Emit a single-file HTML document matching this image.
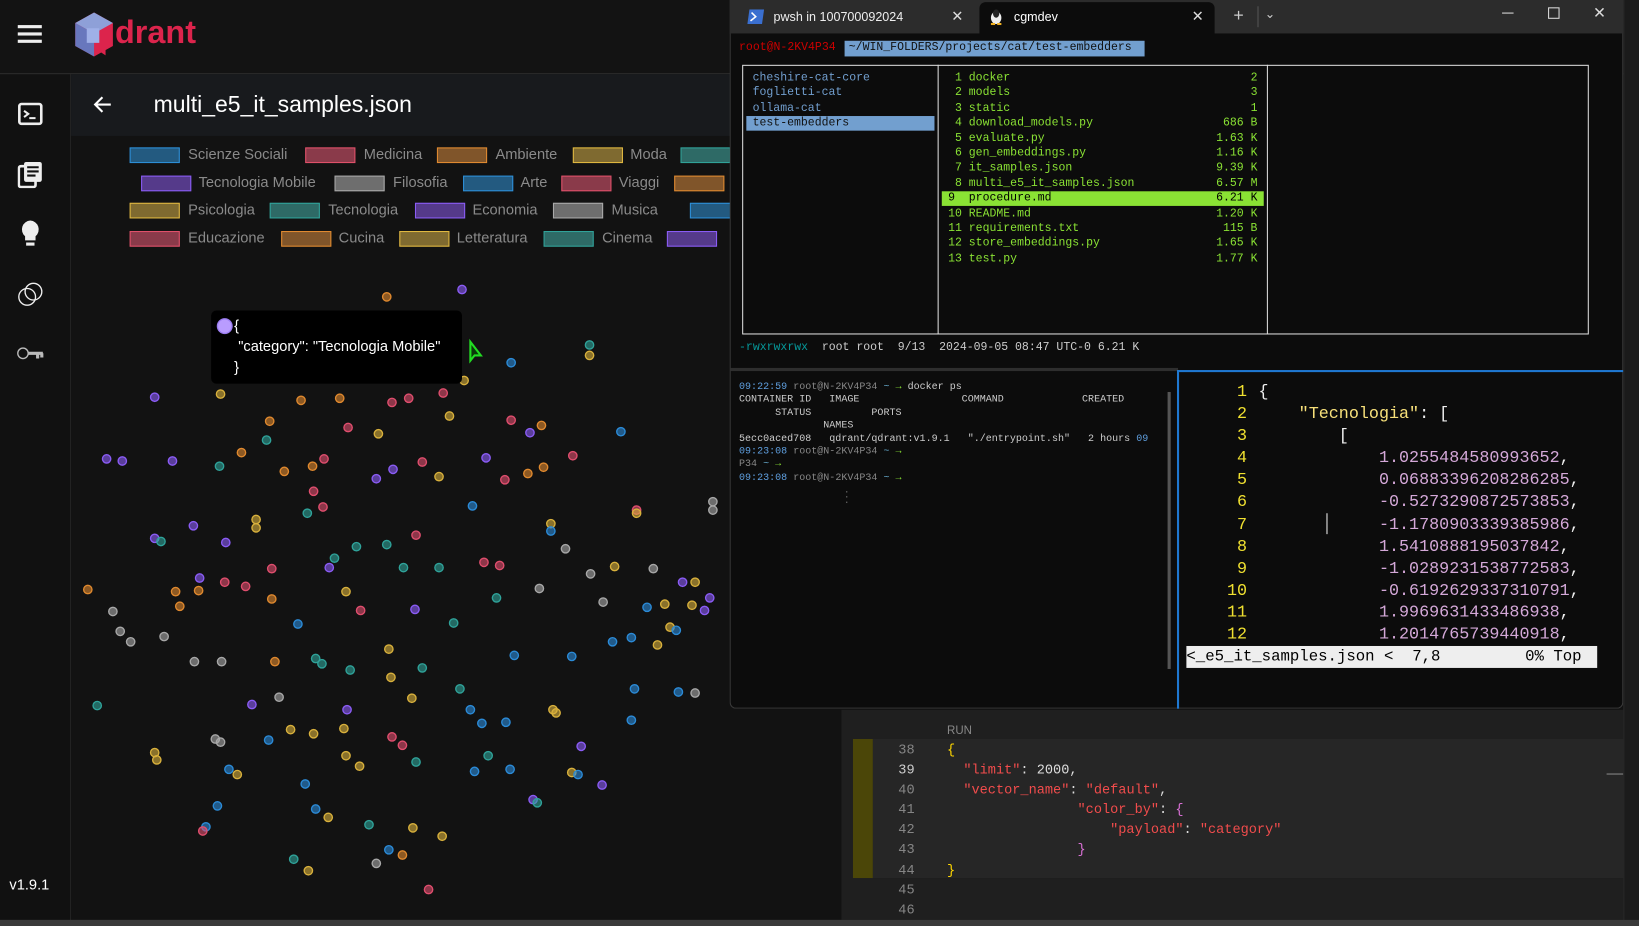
<!DOCTYPE html>
<html><head><meta charset="utf-8">
<style>
html,body{margin:0;padding:0;width:1639px;height:926px;overflow:hidden;background:#121212;}
#root{position:absolute;left:0;top:0;width:1568px;height:886px;transform:scale(1.04528);transform-origin:0 0;background:#121212;font-family:"Liberation Sans",sans-serif;overflow:hidden;}
.a{position:absolute;white-space:pre;}
.m{font-family:"Liberation Mono","DejaVu Sans Mono",monospace;}
.sw{position:absolute;width:46px;height:13px;border:1px solid;}
.lg{position:absolute;color:#8a8a8a;font-size:14px;line-height:17px;}
</style></head><body><div id="root">

<!-- sidebar -->
<div class="a" style="left:0;top:0;width:67px;height:886px;background:#111;border-right:1px solid #232323"></div>
<div class="a" style="left:0;top:0;width:1568px;height:70px;background:#131313;border-bottom:1px solid #2c2c2c"></div>
<div class="a" style="left:17px;top:24px;width:23px;height:3px;background:#eee;box-shadow:0 7px 0 #eee,0 14px 0 #eee"></div>
<svg class="a" style="left:70px;top:11px" width="40" height="44" viewBox="0 0 40 44">
<polygon points="20,1 38,11 38,33 20,43 2,33 2,11" fill="#dc244c"/>
<polygon points="20,1 38,11 20,21 2,11" fill="#8ea0d8"/>
<polygon points="2,11 20,21 20,43 2,33" fill="#6877bd"/>
<rect x="13" y="16" width="12" height="14" fill="#9fb0e8"/>
<polygon points="25,30 31,34 31,42 25,38" fill="#dc244c"/>
</svg>
<div class="a" style="left:110px;top:13px;color:#dc244c;font-size:31px;font-weight:bold;letter-spacing:0px">drant</div>
<svg class="a" style="left:17px;top:98px" width="24" height="22" viewBox="0 0 24 22"><rect x="1.5" y="1.5" width="21" height="19" rx="2" fill="none" stroke="#eee" stroke-width="2.5"/><path d="M6 8l4 3-4 3M11 15h6" stroke="#eee" stroke-width="2" fill="none"/></svg>
<svg class="a" style="left:17px;top:154px" width="24" height="26" viewBox="0 0 24 26"><rect x="1" y="5" width="16" height="20" rx="2" fill="none" stroke="#eee" stroke-width="2.5"/><rect x="6" y="1" width="17" height="19" rx="2" fill="#eee"/><path d="M9 6h11M9 10h11M9 14h8" stroke="#111" stroke-width="2"/></svg>
<svg class="a" style="left:19px;top:210px" width="20" height="28" viewBox="0 0 20 28"><path d="M10 1a8.5 8.5 0 0 0-5 15v4h10v-4a8.5 8.5 0 0 0-5-15z" fill="#eee"/><rect x="6" y="22" width="8" height="3" fill="#eee"/></svg>
<svg class="a" style="left:15px;top:268px" width="28" height="28" viewBox="0 0 28 28"><circle cx="11" cy="16" r="8" fill="none" stroke="#eee" stroke-width="3"/><circle cx="17" cy="11" r="8" fill="none" stroke="#eee" stroke-width="3"/></svg>
<svg class="a" style="left:15px;top:330px" width="28" height="16" viewBox="0 0 28 16"><circle cx="7" cy="8" r="5" fill="none" stroke="#bbb" stroke-width="3"/><path d="M12 8h14M21 8v5M25 8v4" stroke="#bbb" stroke-width="3"/></svg>
<div class="a" style="left:9px;top:838px;color:#fff;font-size:14px">v1.9.1</div>

<!-- title bar -->
<div class="a" style="left:68px;top:71px;width:640px;height:59px;background:#181a1d"></div>
<svg class="a" style="left:88px;top:90px" width="20" height="20" viewBox="0 0 20 20"><path d="M18 10H3M10 3l-7 7 7 7" stroke="#fff" stroke-width="2" fill="none"/></svg>
<div class="a" style="left:147px;top:87px;color:#fff;font-size:22px">multi_e5_it_samples.json</div>

<!-- legend -->
<div class="sw" style="left:124px;top:141px;background:#235a80;border-color:#2d8fd8"></div><div class="lg" style="left:180px;top:139px">Scienze Sociali</div>
<div class="sw" style="left:292px;top:141px;background:#8a3a4a;border-color:#e0506a"></div><div class="lg" style="left:348px;top:139px">Medicina</div>
<div class="sw" style="left:418px;top:141px;background:#80552a;border-color:#e08a30"></div><div class="lg" style="left:474px;top:139px">Ambiente</div>
<div class="sw" style="left:548px;top:141px;background:#7f6a30;border-color:#e0b840"></div><div class="lg" style="left:603px;top:139px">Moda</div>
<div class="sw" style="left:651px;top:141px;background:#2e6a66;border-color:#30a39a"></div>
<div class="sw" style="left:135px;top:168px;background:#553a8a;border-color:#8b5cf6"></div><div class="lg" style="left:190px;top:166px">Tecnologia Mobile</div>
<div class="sw" style="left:320px;top:168px;background:#6e6e6e;border-color:#aaa"></div><div class="lg" style="left:376px;top:166px">Filosofia</div>
<div class="sw" style="left:443px;top:168px;background:#235a80;border-color:#2d8fd8"></div><div class="lg" style="left:498px;top:166px">Arte</div>
<div class="sw" style="left:537px;top:168px;background:#8a3a4a;border-color:#e0506a"></div><div class="lg" style="left:592px;top:166px">Viaggi</div>
<div class="sw" style="left:645px;top:168px;background:#80552a;border-color:#e08a30"></div>
<div class="sw" style="left:124px;top:194px;background:#7f6a30;border-color:#e0b840"></div><div class="lg" style="left:180px;top:192px">Psicologia</div>
<div class="sw" style="left:258px;top:194px;background:#2e6a66;border-color:#30a39a"></div><div class="lg" style="left:314px;top:192px">Tecnologia</div>
<div class="sw" style="left:397px;top:194px;background:#553a8a;border-color:#8b5cf6"></div><div class="lg" style="left:452px;top:192px">Economia</div>
<div class="sw" style="left:529px;top:194px;background:#6e6e6e;border-color:#aaa"></div><div class="lg" style="left:585px;top:192px">Musica</div>
<div class="sw" style="left:660px;top:194px;background:#235a80;border-color:#2d8fd8"></div>
<div class="sw" style="left:124px;top:221px;background:#8a3a4a;border-color:#e0506a"></div><div class="lg" style="left:180px;top:219px">Educazione</div>
<div class="sw" style="left:269px;top:221px;background:#80552a;border-color:#e08a30"></div><div class="lg" style="left:324px;top:219px">Cucina</div>
<div class="sw" style="left:382px;top:221px;background:#7f6a30;border-color:#e0b840"></div><div class="lg" style="left:437px;top:219px">Letteratura</div>
<div class="sw" style="left:520px;top:221px;background:#2e6a66;border-color:#30a39a"></div><div class="lg" style="left:576px;top:219px">Cinema</div>
<div class="sw" style="left:638px;top:221px;background:#553a8a;border-color:#8b5cf6"></div>

<!-- scatter -->
<svg class="a" style="left:0;top:0" width="720" height="886" viewBox="0 0 720 886">
<defs><style>
.o{fill:rgba(224,137,46,.6);stroke:#e0892e}.p{fill:rgba(139,92,246,.6);stroke:#8b5cf6}.r{fill:rgba(224,78,110,.6);stroke:#e04e6e}
.y{fill:rgba(217,177,60,.6);stroke:#d9b13c}.t{fill:rgba(47,163,154,.6);stroke:#2fa39a}.b{fill:rgba(43,139,216,.6);stroke:#2b8bd8}.g{fill:rgba(168,168,168,.6);stroke:#a8a8a8}
circle{stroke-width:1.3}
</style></defs>
<g>
<circle class="o" cx="370" cy="284" r="4"/><circle class="p" cx="442" cy="277" r="4"/><circle class="t" cx="564" cy="330" r="4"/><circle class="y" cx="564" cy="340" r="4"/><circle class="b" cx="489" cy="347" r="4"/><circle class="p" cx="148" cy="380" r="4"/><circle class="y" cx="211" cy="377" r="4"/><circle class="y" cx="444" cy="364" r="4"/><circle class="o" cx="288" cy="383" r="4"/><circle class="o" cx="325" cy="381" r="4"/><circle class="r" cx="375" cy="385" r="4"/><circle class="r" cx="391" cy="381" r="4"/><circle class="r" cx="424" cy="376" r="4"/><circle class="o" cx="258" cy="403" r="4"/><circle class="y" cx="430" cy="398" r="4"/><circle class="r" cx="333" cy="409" r="4"/><circle class="y" cx="362" cy="415" r="4"/><circle class="r" cx="489" cy="402" r="4"/><circle class="p" cx="507" cy="414" r="4"/><circle class="o" cx="518" cy="407" r="4"/><circle class="b" cx="594" cy="413" r="4"/><circle class="r" cx="548" cy="436" r="4"/><circle class="t" cx="255" cy="421" r="4"/><circle class="o" cx="231" cy="433" r="4"/><circle class="p" cx="102" cy="439" r="4"/><circle class="p" cx="117" cy="441" r="4"/><circle class="p" cx="165" cy="441" r="4"/><circle class="t" cx="210" cy="446" r="4"/><circle class="o" cx="272" cy="451" r="4"/><circle class="o" cx="299" cy="446" r="4"/><circle class="r" cx="310" cy="439" r="4"/><circle class="p" cx="376" cy="449" r="4"/><circle class="r" cx="404" cy="442" r="4"/><circle class="p" cx="465" cy="438" r="4"/><circle class="o" cx="505" cy="453" r="4"/><circle class="o" cx="520" cy="447" r="4"/><circle class="r" cx="483" cy="459" r="4"/><circle class="p" cx="360" cy="458" r="4"/><circle class="y" cx="420" cy="456" r="4"/><circle class="r" cx="300" cy="470" r="4"/><circle class="r" cx="309" cy="485" r="4"/><circle class="y" cx="245" cy="497" r="4"/><circle class="y" cx="245" cy="505" r="4"/><circle class="t" cx="294" cy="491" r="4"/><circle class="b" cx="452" cy="484" r="4"/><circle class="y" cx="527" cy="501" r="4"/><circle class="b" cx="527" cy="508" r="4"/><circle class="r" cx="609" cy="488" r="4"/><circle class="y" cx="609" cy="491" r="4"/><circle class="g" cx="682" cy="480" r="4"/><circle class="g" cx="682" cy="488" r="4"/><circle class="p" cx="185" cy="503" r="4"/><circle class="p" cx="148" cy="515" r="4"/><circle class="t" cx="154" cy="518" r="4"/><circle class="p" cx="216" cy="519" r="4"/><circle class="t" cx="341" cy="523" r="4"/><circle class="t" cx="370" cy="521" r="4"/><circle class="r" cx="398" cy="512" r="4"/><circle class="p" cx="191" cy="553" r="4"/><circle class="o" cx="190" cy="565" r="4"/><circle class="r" cx="235" cy="561" r="4"/><circle class="r" cx="215" cy="557" r="4"/><circle class="r" cx="260" cy="544" r="4"/><circle class="t" cx="320" cy="534" r="4"/><circle class="p" cx="315" cy="543" r="4"/><circle class="t" cx="386" cy="543" r="4"/><circle class="t" cx="420" cy="543" r="4"/><circle class="r" cx="463" cy="538" r="4"/><circle class="r" cx="478" cy="541" r="4"/><circle class="g" cx="541" cy="525" r="4"/><circle class="g" cx="565" cy="549" r="4"/><circle class="y" cx="588" cy="542" r="4"/><circle class="g" cx="625" cy="544" r="4"/><circle class="y" cx="665" cy="557" r="4"/><circle class="p" cx="679" cy="572" r="4"/><circle class="p" cx="653" cy="557" r="4"/><circle class="o" cx="84" cy="564" r="4"/><circle class="g" cx="108" cy="585" r="4"/><circle class="g" cx="115" cy="604" r="4"/><circle class="g" cx="125" cy="614" r="4"/><circle class="g" cx="157" cy="609" r="4"/><circle class="o" cx="168" cy="566" r="4"/><circle class="o" cx="172" cy="580" r="4"/><circle class="o" cx="260" cy="573" r="4"/><circle class="b" cx="285" cy="597" r="4"/><circle class="r" cx="345" cy="584" r="4"/><circle class="y" cx="331" cy="566" r="4"/><circle class="p" cx="397" cy="583" r="4"/><circle class="t" cx="434" cy="596" r="4"/><circle class="t" cx="475" cy="572" r="4"/><circle class="g" cx="516" cy="563" r="4"/><circle class="g" cx="577" cy="576" r="4"/><circle class="b" cx="619" cy="581" r="4"/><circle class="y" cx="636" cy="578" r="4"/><circle class="y" cx="662" cy="579" r="4"/><circle class="p" cx="674" cy="584" r="4"/><circle class="g" cx="186" cy="633" r="4"/><circle class="g" cx="212" cy="633" r="4"/><circle class="o" cx="263" cy="633" r="4"/><circle class="t" cx="302" cy="630" r="4"/><circle class="t" cx="308" cy="635" r="4"/><circle class="t" cx="335" cy="641" r="4"/><circle class="y" cx="372" cy="621" r="4"/><circle class="y" cx="374" cy="648" r="4"/><circle class="t" cx="404" cy="639" r="4"/><circle class="t" cx="440" cy="659" r="4"/><circle class="b" cx="492" cy="627" r="4"/><circle class="b" cx="547" cy="628" r="4"/><circle class="b" cx="586" cy="614" r="4"/><circle class="b" cx="604" cy="610" r="4"/><circle class="y" cx="629" cy="617" r="4"/><circle class="y" cx="641" cy="600" r="4"/><circle class="b" cx="647" cy="603" r="4"/><circle class="b" cx="607" cy="659" r="4"/><circle class="b" cx="649" cy="662" r="4"/><circle class="g" cx="665" cy="663" r="4"/><circle class="t" cx="93" cy="675" r="4"/><circle class="p" cx="241" cy="674" r="4"/><circle class="g" cx="267" cy="667" r="4"/><circle class="p" cx="332" cy="679" r="4"/><circle class="y" cx="329" cy="697" r="4"/><circle class="y" cx="394" cy="668" r="4"/><circle class="b" cx="450" cy="679" r="4"/><circle class="b" cx="461" cy="692" r="4"/><circle class="b" cx="484" cy="691" r="4"/><circle class="y" cx="529" cy="679" r="4"/><circle class="y" cx="532" cy="682" r="4"/><circle class="b" cx="604" cy="689" r="4"/><circle class="g" cx="211" cy="710" r="4"/><circle class="g" cx="206" cy="707" r="4"/><circle class="y" cx="278" cy="698" r="4"/><circle class="b" cx="257" cy="708" r="4"/><circle class="y" cx="300" cy="702" r="4"/><circle class="y" cx="331" cy="723" r="4"/><circle class="y" cx="344" cy="733" r="4"/><circle class="r" cx="375" cy="705" r="4"/><circle class="r" cx="385" cy="713" r="4"/><circle class="t" cx="398" cy="729" r="4"/><circle class="t" cx="467" cy="723" r="4"/><circle class="b" cx="454" cy="738" r="4"/><circle class="b" cx="488" cy="736" r="4"/><circle class="y" cx="547" cy="739" r="4"/><circle class="b" cx="553" cy="741" r="4"/><circle class="p" cx="556" cy="714" r="4"/><circle class="p" cx="576" cy="751" r="4"/><circle class="y" cx="148" cy="720" r="4"/><circle class="y" cx="150" cy="727" r="4"/><circle class="b" cx="219" cy="736" r="4"/><circle class="y" cx="227" cy="741" r="4"/><circle class="b" cx="292" cy="750" r="4"/><circle class="b" cx="208" cy="771" r="4"/><circle class="b" cx="302" cy="774" r="4"/><circle class="y" cx="314" cy="782" r="4"/><circle class="t" cx="353" cy="789" r="4"/><circle class="y" cx="395" cy="792" r="4"/><circle class="y" cx="423" cy="800" r="4"/><circle class="p" cx="510" cy="765" r="4"/><circle class="t" cx="514" cy="768" r="4"/><circle class="b" cx="197" cy="791" r="4"/><circle class="r" cx="194" cy="795" r="4"/><circle class="t" cx="281" cy="822" r="4"/><circle class="y" cx="295" cy="833" r="4"/><circle class="g" cx="360" cy="826" r="4"/><circle class="b" cx="372" cy="813" r="4"/><circle class="o" cx="385" cy="818" r="4"/><circle class="r" cx="410" cy="851" r="4"/><circle class="g" cx="705" cy="603" r="4"/>
</g>
<rect x="202" y="297" width="240" height="70" rx="5" fill="#000"/>
<circle cx="215" cy="312" r="7" fill="#b99cff" stroke="#9a7cf0" stroke-width="1.5"/>
<path d="M450 327l0 18 4-5 6 0z" fill="#0a3a0a" stroke="#22dd22" stroke-width="2"/>
</svg>
<div class="a" style="left:224px;top:301px;color:#fff;font-size:14px;line-height:20px">{
 "category": "Tecnologia Mobile"
}</div>

<!-- terminal window -->
<div class="a" style="left:698px;top:0;width:855px;height:678px;background:#0c0c0c;border:1px solid #3a3a3a;border-top:none;border-radius:0 0 6px 6px;box-sizing:border-box"></div>
<div class="a" style="left:698px;top:0;width:855px;height:32px;background:#2c2c2c"></div>
<svg class="a" style="left:715px;top:9px" width="16" height="14" viewBox="0 0 16 14"><path d="M2 0h14l-2 14H0z" fill="#3a6fd0"/><path d="M4 3l4 4-5 4" stroke="#fff" stroke-width="1.5" fill="none"/></svg>
<div class="a" style="left:740px;top:9px;color:#eee;font-size:12px">pwsh in 100700092024</div>
<div class="a" style="left:910px;top:7px;color:#ddd;font-size:14px">✕</div>
<div class="a" style="left:937px;top:2px;width:225px;height:30px;background:#0c0c0c;border-radius:6px 6px 0 0"></div>
<svg class="a" style="left:946px;top:8px" width="14" height="16" viewBox="0 0 14 16"><ellipse cx="7" cy="9" rx="5" ry="6" fill="#eee"/><ellipse cx="7" cy="5" rx="3" ry="4" fill="#222"/><path d="M2 15h4M8 15h4" stroke="#f0b020" stroke-width="2"/></svg>
<div class="a" style="left:970px;top:9px;color:#fff;font-size:12px">cgmdev</div>
<div class="a" style="left:1140px;top:7px;color:#ddd;font-size:14px">✕</div>
<div class="a" style="left:1180px;top:5px;color:#ccc;font-size:17px">+</div>
<div class="a" style="left:1203px;top:6px;width:1px;height:20px;background:#555"></div>
<div class="a" style="left:1210px;top:6px;color:#ccc;font-size:12px">⌄</div>
<div class="a" style="left:1437px;top:12px;width:11px;height:1px;background:#ddd"></div>
<div class="a" style="left:1481px;top:7px;width:9px;height:9px;border:1px solid #ddd"></div>
<div class="a" style="left:1524px;top:3px;color:#ddd;font-size:15px">✕</div>

<div class="a m" style="left:707px;top:40px;color:#cc0000;font-size:11px">root@N-2KV4P34</div>
<div class="a m" style="left:808px;top:39px;width:287px;height:15px;background:#729fcf;color:#101010;font-size:11px;line-height:15px;padding-left:4px;box-sizing:border-box">~/WIN_FOLDERS/projects/cat/test-embedders</div>

<div class="a" style="left:710px;top:62px;width:810px;height:258px;border:1px solid #ddd;box-sizing:border-box"></div>
<div class="a" style="left:897px;top:62px;width:1px;height:258px;background:#ddd"></div>
<div class="a" style="left:1212px;top:62px;width:1px;height:258px;background:#ddd"></div>
<div class="a" style="left:714px;top:111px;width:180px;height:14px;background:#729fcf"></div>
<div class="a m" style="left:720px;top:68px;color:#729fcf;font-size:11px;line-height:14.4px">cheshire-cat-core
foglietti-cat
ollama-cat
<span style="color:#111">test-embedders</span></div>
<div class="a" style="left:901px;top:183px;width:308px;height:14px;background:#8ae234"></div>
<div class="a m" style="left:907px;top:68px;color:#8ae234;font-size:11px;line-height:14.4px"> 1 docker
 2 models
 3 static
 4 download_models.py
 5 evaluate.py
 6 gen_embeddings.py
 7 it_samples.json
 8 multi_e5_it_samples.json
<span style="color:#000">9  procedure.md</span>
10 README.md
11 requirements.txt
12 store_embeddings.py
13 test.py</div>
<div class="a m" style="left:1140px;top:68px;width:63px;text-align:right;color:#8ae234;font-size:11px;line-height:14.4px">2
3
1
686 B
1.63 K
1.16 K
9.39 K
6.57 M
<span style="color:#000">6.21 K</span>
1.20 K
115 B
1.65 K
1.77 K</div>
<div class="a m" style="left:707px;top:327px;color:#ccc;font-size:11px"><span style="color:#06989a">-rwxrwxrwx</span>  root root  9/13  2024-09-05 08:47 UTC-0 6.21 K</div>

<div class="a" style="left:699px;top:352px;width:428px;height:3px;background:#2e2e2e"></div>
<div class="a" style="left:1127px;top:354px;width:426px;height:2px;background:#1f78d1"></div>
<div class="a" style="left:1126px;top:354px;width:2px;height:324px;background:#1f78d1"></div>
<div class="a" style="left:1117px;top:375px;width:3px;height:265px;background:#555"></div>

<div class="a m" style="left:707px;top:364px;color:#ccc;font-size:9.6px;line-height:12.4px"><span style="color:#5f9fdf">09:22:59</span> <span style="color:#888">root@N-2KV4P34</span> <span style="color:#6ac">~</span> <span style="color:#8ae234">→</span> docker ps
CONTAINER ID   IMAGE                 COMMAND             CREATED
      STATUS          PORTS
              NAMES
5ecc0aced708   qdrant/qdrant:v1.9.1   "./entrypoint.sh"   2 hours <span style="color:#5f9fdf">09</span>
<span style="color:#5f9fdf">09:23:08</span> <span style="color:#888">root@N-2KV4P34</span> <span style="color:#6ac">~</span> <span style="color:#8ae234">→</span>
<span style="color:#888">P34</span> <span style="color:#6ac">~</span> <span style="color:#8ae234">→</span>
<span style="color:#5f9fdf">09:23:08</span> <span style="color:#888">root@N-2KV4P34</span> <span style="color:#6ac">~</span> <span style="color:#8ae234">→</span></div>
<div class="a" style="left:808px;top:468px;color:#666;font-size:12px;line-height:5px">·<br>·<br>·</div>

<div class="a m" style="left:1150px;top:365px;width:43px;text-align:right;color:#f0e030;font-size:16px;line-height:21.1px">1
2
3
4
5
6
7
8
9
10
11
12</div>
<div class="a m" style="left:1204px;top:365px;color:#eee;font-size:16px;line-height:21.1px">{
    <span style="color:#f7e07a">"Tecnologia"</span>: [
        [
            <span style="color:#d4a8d8">1.0255484580993652</span>,
            <span style="color:#d4a8d8">0.06883396208286285</span>,
            <span style="color:#d4a8d8">-0.5273290872573853</span>,
            <span style="color:#d4a8d8">-1.1780903339385986</span>,
            <span style="color:#d4a8d8">1.5410888195037842</span>,
            <span style="color:#d4a8d8">-1.0289231538772583</span>,
            <span style="color:#d4a8d8">-0.6192629337310791</span>,
            <span style="color:#d4a8d8">1.9969631433486938</span>,
            <span style="color:#d4a8d8">1.2014765739440918</span>,</div>
<div class="a" style="left:1269px;top:491px;width:1px;height:20px;background:#eee"></div>
<div class="a m" style="left:1135px;top:618px;width:393px;height:21px;background:#eee;color:#000;font-size:15px;line-height:21px;overflow:hidden">&lt;_e5_it_samples.json &lt;  7,8         0% Top</div>

<!-- vscode below -->
<div class="a" style="left:805px;top:679px;width:748px;height:201px;background:#1f1f1f"></div>
<div class="a" style="left:835px;top:707px;width:718px;height:133px;background:#262626"></div>
<div class="a" style="left:816px;top:707px;width:19px;height:133px;background:#4b4608"></div>
<div class="a" style="left:906px;top:693px;color:#888;font-size:11px">RUN</div>
<div class="a m" style="left:840px;top:708px;width:35px;text-align:right;color:#858585;font-size:13px;line-height:19.1px">38
<span style="color:#ccc">39</span>
40
41
42
43
44
45
46</div>
<div class="a m" style="left:906px;top:708px;color:#ddd;font-size:13px;line-height:19.1px"><span style="color:#ffd700">{</span>
  <span style="color:#f14c4c">"limit"</span>: 2000,
  <span style="color:#f14c4c">"vector_name"</span>: <span style="color:#f14c4c">"default"</span>,
                <span style="color:#f14c4c">"color_by"</span>: <span style="color:#da70d6">{</span>
                    <span style="color:#f14c4c">"payload"</span>: <span style="color:#f14c4c">"category"</span>
                <span style="color:#da70d6">}</span>
<span style="color:#ffd700">}</span></div>
<div class="a" style="left:1537px;top:740px;width:16px;height:1px;background:#888"></div>

<div class="a" style="left:1553px;top:0;width:15px;height:880px;background:#1b1b1b;border-left:1px solid #2a2a2a"></div>
<div class="a" style="left:0;top:880px;width:1568px;height:6px;background:#3a3a3a"></div>
</div></body></html>
